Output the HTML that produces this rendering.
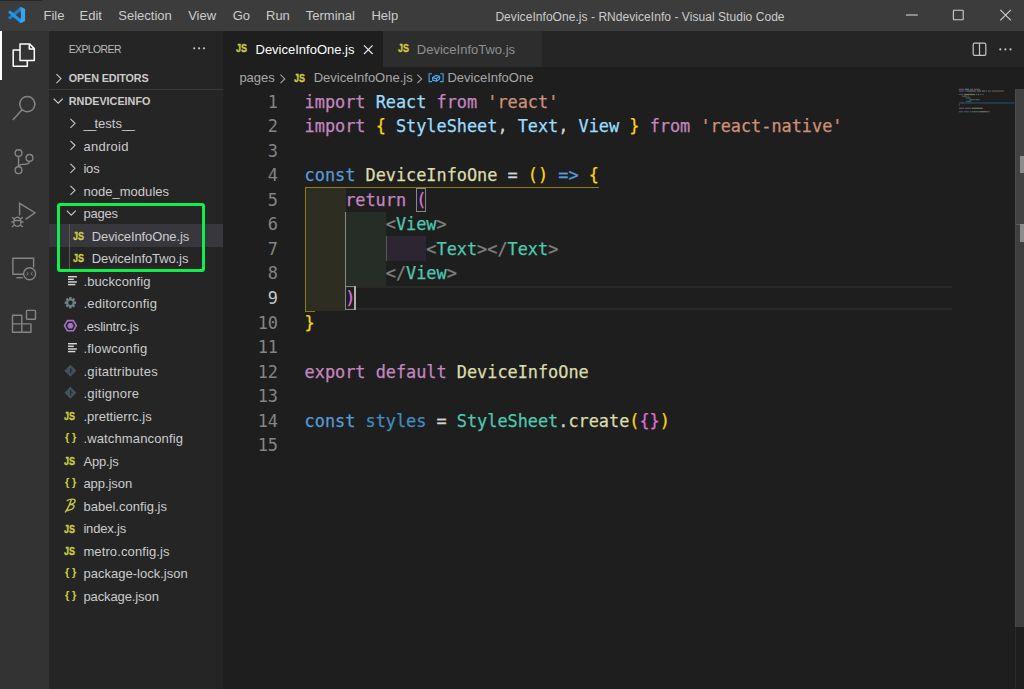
<!DOCTYPE html>
<html><head><meta charset="utf-8"><title>DeviceInfoOne.js - RNdeviceInfo - Visual Studio Code</title>
<style>
*{box-sizing:border-box;margin:0;padding:0}
html,body{width:1024px;height:689px;overflow:hidden;background:#1e1e1e;font-family:"Liberation Sans",sans-serif;color:#ccc}
.abs{position:absolute}
svg{position:absolute;overflow:visible}
#title{left:0;top:0;width:1024px;height:30.5px;background:#3c3c3c}
#title .m{position:absolute;top:8px;font-size:13px;color:#ccc;white-space:nowrap;line-height:16px}
#wtitle{position:absolute;top:8.5px;left:440px;width:400px;text-align:center;font-size:12px;letter-spacing:0.05px;color:#ccc;line-height:16px;white-space:nowrap}
#act{left:0;top:31px;width:49px;height:658px;background:#333}
#side{left:49px;top:31px;width:174px;height:658px;background:#252526}
#tabs{left:223px;top:30.5px;width:801px;height:36px;background:#252526}
.tab{position:absolute;top:0;height:36px;white-space:nowrap}
.tx{position:absolute;white-space:nowrap;line-height:16px;font-size:13px}
#crumbs{left:223px;top:66.5px;width:801px;height:22.5px;background:#1e1e1e}
#editor{left:223px;top:89px;width:801px;height:600px;background:#1e1e1e}
.row{position:absolute;left:0;width:174px;height:22.52px}
.row .t{position:absolute;top:4.1px;line-height:16px;font-size:13px;color:#ccc;white-space:nowrap}
.ic{position:absolute;font-weight:700;white-space:nowrap;line-height:16px}
.code{position:absolute;left:81.6px;margin-top:0.5px;-webkit-text-stroke:0.25px;font-family:"DejaVu Sans Mono","Liberation Mono",monospace;font-size:16.9px;letter-spacing:-0.024px;white-space:pre;line-height:24.57px;height:24.57px;color:#d4d4d4}
.ln{position:absolute;left:0;width:55px;margin-top:0.5px;text-align:right;font-family:"DejaVu Sans Mono","Liberation Mono",monospace;font-size:16.9px;color:#858585;line-height:24.57px;height:24.57px}
.k{color:#c586c0}.b{color:#569cd6}.v{color:#9cdcfe}.s{color:#ce9178}.y{color:#ffd700}.p{color:#da70d6}.w{color:#d4d4d4}.f{color:#dcdcaa}.g{color:#4ec9b0}.t{color:#808080}
.hd{position:absolute;font-size:10.8px;font-weight:700;color:#ccc;white-space:nowrap;line-height:14px}
</style></head><body>
<div class="abs" style="left:0;top:29px;width:49px;height:3px;background:#333"></div><div class="abs" style="left:49px;top:29px;width:174px;height:3px;background:#252526"></div>
<div id="title" class="abs">
<span class="m" style="left:43.5px">File</span>
<span class="m" style="left:79.5px">Edit</span>
<span class="m" style="left:118.3px">Selection</span>
<span class="m" style="left:188.2px">View</span>
<span class="m" style="left:232.7px">Go</span>
<span class="m" style="left:266.0px">Run</span>
<span class="m" style="left:305.8px">Terminal</span>
<span class="m" style="left:371.4px">Help</span>
<div id="wtitle">DeviceInfoOne.js - RNdeviceInfo - Visual Studio Code</div>
<svg style="left:0;top:0" width="1" height="1" ><polygon points="8.0,17.5 10.0,19.7 22.9,8.9 20.6,6.8" fill="#1b80cc"/><polygon points="8.0,12.5 10.0,10.3 22.9,21.1 20.6,23.2" fill="#2196e8"/><polygon points="20.6,6.8 25.1,9 25.1,21 20.6,23.2" fill="#33a6f3"/><polygon points="20.6,12.2 20.6,17.8 17.2,15" fill="#3c3c3c"/></svg>
<svg style="left:0;top:0" width="1" height="1" ><g fill="none" stroke="#d0d0d0" stroke-width="1.1"><path d="M905.9 15 H917.8"/><rect x="953.4" y="10.2" width="9.8" height="9.6" rx="0.6"/><path d="M1000.3 9.8 L1010.9 20.4 M1010.9 9.8 L1000.3 20.4"/></g></svg>
<div class="abs" style="left:0;top:0;width:42px;height:1px;background:#262626"></div>
</div>
<div id="act" class="abs"><div class="abs" style="left:0;top:0;width:1.7px;height:49.2px;background:#fff"></div>
<svg style="left:0;top:0" width="1" height="1" ><g fill="none" stroke="#fff" stroke-width="1.5" stroke-linejoin="round"><path d="M20 12.9 H29.6 L34.3 17.6 V29.6 H20 Z" /><path d="M29.3 13.2 V18 H34"/><path d="M20 18.9 H13.2 V35.3 H27.3 V30"/></g></svg>
<svg style="left:0;top:0" width="1" height="1" ><g fill="none" stroke="#858585" stroke-width="1.5"><circle cx="27.3" cy="73.1" r="7.6"/><path d="M22.3 78.6 L12.8 89"/></g></svg>
<svg style="left:0;top:0" width="1" height="1" ><g fill="none" stroke="#858585" stroke-width="1.4"><circle cx="18.5" cy="122.1" r="3.4"/><circle cx="18.5" cy="139.2" r="3.4"/><circle cx="29.5" cy="126.9" r="3.4"/><path d="M18.5 125.5 V135.8"/><path d="M29.5 130.3 C29.5 133.6 26 133.2 22.5 133.4 C20 133.6 18.8 134.5 18.6 136"/></g></svg>
<svg style="left:0;top:0" width="1" height="1" ><g fill="none" stroke="#858585" stroke-width="1.4" stroke-linejoin="miter"><path d="M19.6 184.5 V172.3 L35 181.7 L25.6 188.4"/><ellipse cx="17.4" cy="190.8" rx="3.6" ry="4.6"/><path d="M13.8 189.5 H21 M12 186.3 L14.6 188 M22.8 186.3 L20.2 188 M11.3 191 H13.8 M21 191 H23.5 M12 196 L14.6 193.8 M22.8 196 L20.2 193.8"/></g></svg>
<svg style="left:0;top:0" width="1" height="1" ><g fill="none" stroke="#858585" stroke-width="1.4"><path d="M23.5 243.2 H12.9 V227.2 H33.6 V236.5"/><path d="M16.5 246.7 H22.8"/><circle cx="29.6" cy="242.7" r="6.0"/><path d="M26.6 241.2 L28.3 242.7 L26.6 244.2 M32.6 241.2 L30.9 242.7 L32.6 244.2" stroke-width="1"/></g></svg>
<svg style="left:0;top:0" width="1" height="1" ><g fill="none" stroke="#858585" stroke-width="1.4" stroke-linejoin="round"><path d="M12.5 284.3 H21.8 V301.3 H12.5 Z"/><path d="M12.5 292.9 H31 V301.3 H21.8"/><rect x="26.5" y="279.4" width="9" height="8.8" rx="0.8"/></g></svg></div>
<div id="side" class="abs">
<span class="abs" style="left:19.7px;top:11.7px;font-size:10.4px;letter-spacing:-0.55px;color:#bbb;line-height:14px;white-space:nowrap">EXPLORER</span>
<svg style="left:0;top:0" width="1" height="1"><circle cx="145.2" cy="17.3" r="1.1" fill="#c5c5c5"/><circle cx="150.1" cy="17.3" r="1.1" fill="#c5c5c5"/><circle cx="155" cy="17.3" r="1.1" fill="#c5c5c5"/></svg>
<svg style="left:0;top:0" width="1" height="1"><path d="M7.45 43.10 L11.95 47.60 L7.45 52.10" fill="none" stroke="#c5c5c5" stroke-width="1.15"/></svg>
<span class="hd" style="left:19.8px;top:39.6px;letter-spacing:-0.14px">OPEN EDITORS</span>
<div class="abs" style="left:0;top:57.6px;width:174px;height:1px;background:#3a3a3b"></div>
<svg style="left:0;top:0" width="1" height="1"><path d="M4.70 67.75 L9.20 72.25 L13.70 67.75" fill="none" stroke="#c5c5c5" stroke-width="1.15"/></svg>
<span class="hd" style="left:19.8px;top:62.6px">RNDEVICEINFO</span>
<div class="row" style="top:80.90px;">
<svg style="left:0;top:0" width="1" height="1"><path d="M21.45 6.86 L25.95 11.36 L21.45 15.86" fill="none" stroke="#c5c5c5" stroke-width="1.15"/></svg>
<span class="t" style="left:34.4px;letter-spacing:0.000px"><span style="letter-spacing:-1.7px">__</span>tests<span style="letter-spacing:-1.7px">__</span></span></div>
<div class="row" style="top:103.42px;">
<svg style="left:0;top:0" width="1" height="1"><path d="M21.45 6.86 L25.95 11.36 L21.45 15.86" fill="none" stroke="#c5c5c5" stroke-width="1.15"/></svg>
<span class="t" style="left:34.4px;letter-spacing:0.270px">android</span></div>
<div class="row" style="top:125.93px;">
<svg style="left:0;top:0" width="1" height="1"><path d="M21.45 6.86 L25.95 11.36 L21.45 15.86" fill="none" stroke="#c5c5c5" stroke-width="1.15"/></svg>
<span class="t" style="left:34.4px;letter-spacing:-0.160px">ios</span></div>
<div class="row" style="top:148.45px;">
<svg style="left:0;top:0" width="1" height="1"><path d="M21.45 6.86 L25.95 11.36 L21.45 15.86" fill="none" stroke="#c5c5c5" stroke-width="1.15"/></svg>
<span class="t" style="left:34.4px;letter-spacing:0.036px">node_modules</span></div>
<div class="row" style="top:170.97px;">
<svg style="left:0;top:0" width="1" height="1"><path d="M17.80 8.71 L22.30 13.21 L26.80 8.71" fill="none" stroke="#c5c5c5" stroke-width="1.15"/></svg>
<span class="t" style="left:34.4px;letter-spacing:-0.230px">pages</span></div>
<div class="row" style="top:193.49px; background:#37373d;">
<span class="ic" style="left:23.8px;top:3.4px;font-size:11px;-webkit-text-stroke:0.35px #cbcb41;transform:scaleX(0.82);transform-origin:0 0;color:#cbcb41">JS</span>
<span class="t" style="left:42.8px;letter-spacing:-0.107px">DeviceInfoOne.js</span></div>
<div class="row" style="top:216.00px;">
<span class="ic" style="left:23.8px;top:3.4px;font-size:11px;-webkit-text-stroke:0.35px #cbcb41;transform:scaleX(0.82);transform-origin:0 0;color:#cbcb41">JS</span>
<span class="t" style="left:42.8px;letter-spacing:-0.111px">DeviceInfoTwo.js</span></div>
<div class="row" style="top:238.52px;">
<svg style="left:0;top:0" width="1" height="1" ><rect x="19" y="6.00" width="8.9" height="1.45" fill="#d4d7d6"/><rect x="19" y="8.60" width="5.8" height="1.45" fill="#d4d7d6"/><rect x="19" y="11.25" width="8.9" height="1.45" fill="#d4d7d6"/><rect x="19" y="13.85" width="7.4" height="1.45" fill="#d4d7d6"/></svg>
<span class="t" style="left:34.4px;letter-spacing:0.123px">.buckconfig</span></div>
<div class="row" style="top:261.04px;">
<svg style="left:0;top:0" width="1" height="1" ><rect x="20.15" y="4.999999999999999" width="2.5" height="11.4" fill="#6d8086" transform="rotate(0 21.4 10.7)"/><rect x="20.15" y="4.999999999999999" width="2.5" height="11.4" fill="#6d8086" transform="rotate(45 21.4 10.7)"/><rect x="20.15" y="4.999999999999999" width="2.5" height="11.4" fill="#6d8086" transform="rotate(90 21.4 10.7)"/><rect x="20.15" y="4.999999999999999" width="2.5" height="11.4" fill="#6d8086" transform="rotate(135 21.4 10.7)"/><circle cx="21.4" cy="10.7" r="4.3" fill="#6d8086"/><circle cx="21.4" cy="10.7" r="2.2" fill="#252526"/></svg>
<span class="t" style="left:34.4px;letter-spacing:0.223px">.editorconfig</span></div>
<div class="row" style="top:283.55px;">
<svg style="left:0;top:0" width="1" height="1" ><polygon points="27.30,10.70 24.35,15.81 18.45,15.81 15.50,10.70 18.45,5.59 24.35,5.59" fill="none" stroke="#a074c4" stroke-width="1.6" stroke-linejoin="round"/><polygon points="24.60,10.70 23.00,13.47 19.80,13.47 18.20,10.70 19.80,7.93 23.00,7.93" fill="#a074c4"/></svg>
<span class="t" style="left:34.4px;letter-spacing:-0.200px">.eslintrc.js</span></div>
<div class="row" style="top:306.07px;">
<svg style="left:0;top:0" width="1" height="1" ><rect x="19" y="6.00" width="8.9" height="1.45" fill="#d4d7d6"/><rect x="19" y="8.60" width="5.8" height="1.45" fill="#d4d7d6"/><rect x="19" y="11.25" width="8.9" height="1.45" fill="#d4d7d6"/><rect x="19" y="13.85" width="7.4" height="1.45" fill="#d4d7d6"/></svg>
<span class="t" style="left:34.4px;letter-spacing:0.238px">.flowconfig</span></div>
<div class="row" style="top:328.59px;">
<svg style="left:0;top:0" width="1" height="1" ><polygon points="21.4,5.1 27.0,10.7 21.4,16.299999999999997 15.799999999999999,10.7" fill="#41535b" stroke="#41535b" stroke-width="0.8" stroke-linejoin="round"/><path d="M21.7 8.1 V13.5 M21.7 9.5 L23.599999999999998 11.1" stroke="#252526" stroke-width="0.9" fill="none"/></svg>
<span class="t" style="left:34.4px;letter-spacing:0.267px">.gitattributes</span></div>
<div class="row" style="top:351.10px;">
<svg style="left:0;top:0" width="1" height="1" ><polygon points="21.4,5.1 27.0,10.7 21.4,16.299999999999997 15.799999999999999,10.7" fill="#41535b" stroke="#41535b" stroke-width="0.8" stroke-linejoin="round"/><path d="M21.7 8.1 V13.5 M21.7 9.5 L23.599999999999998 11.1" stroke="#252526" stroke-width="0.9" fill="none"/></svg>
<span class="t" style="left:34.4px;letter-spacing:0.236px">.gitignore</span></div>
<div class="row" style="top:373.62px;">
<span class="ic" style="left:15.4px;top:3.4px;font-size:11px;-webkit-text-stroke:0.35px #cbcb41;transform:scaleX(0.82);transform-origin:0 0;color:#cbcb41">JS</span>
<span class="t" style="left:34.4px;letter-spacing:0.030px">.prettierrc.js</span></div>
<div class="row" style="top:396.14px;">
<span class="ic" style="left:16px;top:2.1px;font-size:11px;letter-spacing:2.6px;color:#cbcb41">{}</span>
<span class="t" style="left:34.4px;letter-spacing:0.139px">.watchmanconfig</span></div>
<div class="row" style="top:418.65px;">
<span class="ic" style="left:15.4px;top:3.4px;font-size:11px;-webkit-text-stroke:0.35px #cbcb41;transform:scaleX(0.82);transform-origin:0 0;color:#cbcb41">JS</span>
<span class="t" style="left:34.4px;letter-spacing:-0.168px">App.js</span></div>
<div class="row" style="top:441.17px;">
<span class="ic" style="left:16px;top:2.1px;font-size:11px;letter-spacing:2.6px;color:#cbcb41">{}</span>
<span class="t" style="left:34.4px;letter-spacing:-0.051px">app.json</span></div>
<div class="row" style="top:463.69px;">
<svg style="left:0;top:0" width="1" height="1" ><path transform="translate(-0.9,-1.3)" d="M19.2 6.8 C21.5 5.2 26.8 4.6 27 7 C27.2 9.2 23.5 10.6 21.6 10.9 C24.2 10.6 26.3 11.4 25.9 13 C25.4 15 21 16.6 18.3 17 M23.2 6 C22 10 20.3 14.4 17.4 18.2" fill="none" stroke="#cbcb41" stroke-width="1.4" stroke-linecap="round"/></svg>
<span class="t" style="left:34.4px;letter-spacing:0.034px">babel.config.js</span></div>
<div class="row" style="top:486.21px;">
<span class="ic" style="left:15.4px;top:3.4px;font-size:11px;-webkit-text-stroke:0.35px #cbcb41;transform:scaleX(0.82);transform-origin:0 0;color:#cbcb41">JS</span>
<span class="t" style="left:34.4px;letter-spacing:-0.169px">index.js</span></div>
<div class="row" style="top:508.72px;">
<span class="ic" style="left:15.4px;top:3.4px;font-size:11px;-webkit-text-stroke:0.35px #cbcb41;transform:scaleX(0.82);transform-origin:0 0;color:#cbcb41">JS</span>
<span class="t" style="left:34.4px;letter-spacing:0.118px">metro.config.js</span></div>
<div class="row" style="top:531.24px;">
<span class="ic" style="left:16px;top:2.1px;font-size:11px;letter-spacing:2.6px;color:#cbcb41">{}</span>
<span class="t" style="left:34.4px;letter-spacing:0.021px">package-lock.json</span></div>
<div class="row" style="top:553.76px;">
<span class="ic" style="left:16px;top:2.1px;font-size:11px;letter-spacing:2.6px;color:#cbcb41">{}</span>
<span class="t" style="left:34.4px;letter-spacing:-0.102px">package.json</span></div>
<div class="abs" style="left:20px;top:193.49px;width:1px;height:45.03px;background:#585858"></div>
<div class="abs" style="left:8.2px;top:172px;width:148.1px;height:68.5px;border:3px solid #0df04b;border-radius:3px"></div>
</div>
<div id="tabs" class="abs">
<div class="tab" style="left:0;width:160px;background:#1e1e1e">
<span class="ic" style="left:13.4px;top:9.9px;font-size:11px;-webkit-text-stroke:0.35px #cbcb41;transform:scaleX(0.82);transform-origin:0 0;color:#cbcb41">JS</span>
<span class="tx" style="left:32.5px;top:11px;color:#fff">DeviceInfoOne.js</span>
<svg style="left:0;top:0" width="1" height="1"><path d="M141 14.4 L149.6 23 M149.6 14.4 L141 23" stroke="#e8e8e8" stroke-width="1.2" fill="none"/></svg>
</div>
<div class="tab" style="left:160.3px;width:159px;background:#2d2d2d">
<span class="ic" style="left:14.4px;top:9.9px;font-size:11px;-webkit-text-stroke:0.35px #cbcb41;transform:scaleX(0.82);transform-origin:0 0;color:#cbcb41">JS</span>
<span class="tx" style="left:33.5px;top:11px;color:#909090">DeviceInfoTwo.js</span>
</div>
<svg style="left:0;top:0" width="1" height="1" ><g fill="none" stroke="#c5c5c5" stroke-width="1.2"><rect x="750.2" y="12.2" width="12.6" height="12.2" rx="1.4"/><path d="M756.5 12.2 V24.4"/></g><circle cx="777.3" cy="18.4" r="1.05" fill="#c5c5c5"/><circle cx="782.4" cy="18.4" r="1.05" fill="#c5c5c5"/><circle cx="787.5" cy="18.4" r="1.05" fill="#c5c5c5"/></svg>
</div>
<div id="crumbs" class="abs">
<span class="tx" style="left:16.4px;top:3.4px;color:#a9a9a9">pages</span>
<svg style="left:0;top:0" width="1" height="1"><path d="M57.46 7.63 L61.74 11.90 L57.46 16.18" fill="none" stroke="#a0a0a0" stroke-width="1.15"/></svg>
<span class="ic" style="left:71px;top:3.4px;font-size:11px;-webkit-text-stroke:0.35px #cbcb41;transform:scaleX(0.82);transform-origin:0 0;color:#cbcb41">JS</span>
<span class="tx" style="left:90.7px;top:3.4px;color:#a9a9a9">DeviceInfoOne.js</span>
<svg style="left:0;top:0" width="1" height="1"><path d="M194.36 7.63 L198.64 11.90 L194.36 16.18" fill="none" stroke="#a0a0a0" stroke-width="1.15"/></svg>
<svg style="left:0;top:0" width="1" height="1" ><g fill="none" stroke="#4ba6ea" stroke-width="1.1"><path d="M209 6.8 H206.1 V14.6 H209"/><path d="M217.2 6.8 H220.1 V14.6 H217.2"/></g><g fill="none" stroke="#4ba6ea" stroke-width="1.2" stroke-linejoin="round"><path d="M209.6 10.6 L212.8 8.4 L216.6 9.4 L216.6 12 L213.4 14.2 L209.6 13.2 Z"/><path d="M209.6 10.6 L213.4 11.6 L216.6 9.4 M213.4 11.6 V14.2"/></g></svg>
<span class="tx" style="left:224.4px;top:3.4px;color:#a9a9a9">DeviceInfoOne</span>
</div>
<div id="editor" class="abs">
<div class="abs" style="left:81.6px;top:196.56px;width:647px;height:24.57px;border-top:2px solid #282828;border-bottom:2px solid #282828"></div>
<div class="abs" style="left:82.1px;top:98.88px;width:40.60px;height:122.65px;background:#2d2d22"></div>
<div class="abs" style="left:122.20px;top:122.85px;width:40.60px;height:73.71px;background:#252d26"></div>
<div class="abs" style="left:162.80px;top:147.42px;width:40.60px;height:24.57px;background:#2d2530"></div>
<div class="abs" style="left:122.20px;top:122.85px;width:1px;height:73.71px;background:#8a8a8a"></div>
<div class="abs" style="left:162.80px;top:147.42px;width:1px;height:24.57px;background:#5a5a5a"></div>
<div class="abs" style="left:81.6px;top:97.68px;width:294.35px;height:1px;background:#8f7d12"></div>
<div class="abs" style="left:81.6px;top:97.68px;width:1px;height:124.35px;background:#8f7d12"></div>
<div class="abs" style="left:81.6px;top:222.03px;width:10px;height:1px;background:#8f7d12"></div>
<div class="abs" style="left:193.05px;top:98.88px;width:10.15px;height:23.97px;border:1px solid #888"></div>
<div class="abs" style="left:122.00px;top:197.16px;width:10.15px;height:23.97px;border:1px solid #888"></div>
<div class="abs" style="left:130.95px;top:197.16px;width:2px;height:23.97px;background:#aeafad"></div>
<div class="ln" style="top:0.00px;color:#858585">1</div>
<div class="code" style="top:0.00px"><span class="k">import</span> <span class="v">React</span> <span class="k">from</span> <span class="s">'react'</span></div>
<div class="ln" style="top:24.57px;color:#858585">2</div>
<div class="code" style="top:24.57px"><span class="k">import</span> <span class="y">{</span> <span class="v">StyleSheet</span>, <span class="v">Text</span>, <span class="v">View</span> <span class="y">}</span> <span class="k">from</span> <span class="s">'react-native'</span></div>
<div class="ln" style="top:49.14px;color:#858585">3</div>
<div class="ln" style="top:73.71px;color:#858585">4</div>
<div class="code" style="top:73.71px"><span class="b">const</span> <span class="f">DeviceInfoOne</span> = <span class="y">()</span> <span class="b">=&gt;</span> <span class="y">{</span></div>
<div class="ln" style="top:98.28px;color:#858585">5</div>
<div class="code" style="top:98.28px">    <span class="k">return</span> <span class="p">(</span></div>
<div class="ln" style="top:122.85px;color:#858585">6</div>
<div class="code" style="top:122.85px">        <span class="t">&lt;</span><span class="g">View</span><span class="t">&gt;</span></div>
<div class="ln" style="top:147.42px;color:#858585">7</div>
<div class="code" style="top:147.42px">            <span class="t">&lt;</span><span class="g">Text</span><span class="t">&gt;&lt;/</span><span class="g">Text</span><span class="t">&gt;</span></div>
<div class="ln" style="top:171.99px;color:#858585">8</div>
<div class="code" style="top:171.99px">        <span class="t">&lt;/</span><span class="g">View</span><span class="t">&gt;</span></div>
<div class="ln" style="top:196.56px;color:#c6c6c6">9</div>
<div class="code" style="top:196.56px">    <span class="p">)</span></div>
<div class="ln" style="top:221.13px;color:#858585">10</div>
<div class="code" style="top:221.13px"><span class="y">}</span></div>
<div class="ln" style="top:245.70px;color:#858585">11</div>
<div class="ln" style="top:270.27px;color:#858585">12</div>
<div class="code" style="top:270.27px"><span class="k">export</span> <span class="k">default</span> <span class="f">DeviceInfoOne</span></div>
<div class="ln" style="top:294.84px;color:#858585">13</div>
<div class="ln" style="top:319.41px;color:#858585">14</div>
<div class="code" style="top:319.41px"><span class="b">const</span> <span class="b" style="color:#3f8ec0">styles</span> = <span class="g">StyleSheet</span>.<span class="f">create</span><span class="y">(</span><span class="p">{}</span><span class="y">)</span></div>
<div class="ln" style="top:343.98px;color:#858585">15</div>
<svg style="left:0;top:0" width="1" height="1"><rect x="735.80" y="13.38" width="55.70" height="1.2" fill="#264f78" opacity="0.9"/><rect x="735.80" y="-0.30" width="5.12" height="1.25" fill="#c586c0" opacity="0.42"/><rect x="741.77" y="-0.30" width="4.26" height="1.25" fill="#9cdcfe" opacity="0.42"/><rect x="746.89" y="-0.30" width="3.41" height="1.25" fill="#c586c0" opacity="0.42"/><rect x="751.15" y="-0.30" width="5.97" height="1.25" fill="#ce9178" opacity="0.42"/><rect x="735.80" y="1.42" width="5.12" height="1.25" fill="#c586c0" opacity="0.42"/><rect x="741.77" y="1.42" width="0.85" height="1.25" fill="#ffd700" opacity="0.42"/><rect x="743.48" y="1.42" width="8.53" height="1.25" fill="#9cdcfe" opacity="0.42"/><rect x="752.01" y="1.42" width="0.85" height="1.25" fill="#d4d4d4" opacity="0.42"/><rect x="753.71" y="1.42" width="3.41" height="1.25" fill="#9cdcfe" opacity="0.42"/><rect x="757.12" y="1.42" width="0.85" height="1.25" fill="#d4d4d4" opacity="0.42"/><rect x="758.83" y="1.42" width="3.41" height="1.25" fill="#9cdcfe" opacity="0.42"/><rect x="763.10" y="1.42" width="0.85" height="1.25" fill="#ffd700" opacity="0.42"/><rect x="764.80" y="1.42" width="3.41" height="1.25" fill="#c586c0" opacity="0.42"/><rect x="769.07" y="1.42" width="11.94" height="1.25" fill="#ce9178" opacity="0.42"/><rect x="735.80" y="4.87" width="4.26" height="1.25" fill="#569cd6" opacity="0.42"/><rect x="740.92" y="4.87" width="11.09" height="1.25" fill="#dcdcaa" opacity="0.42"/><rect x="752.86" y="4.87" width="0.85" height="1.25" fill="#d4d4d4" opacity="0.42"/><rect x="754.57" y="4.87" width="1.71" height="1.25" fill="#ffd700" opacity="0.42"/><rect x="757.12" y="4.87" width="1.71" height="1.25" fill="#569cd6" opacity="0.42"/><rect x="759.68" y="4.87" width="0.85" height="1.25" fill="#ffd700" opacity="0.42"/><rect x="739.21" y="6.59" width="5.12" height="1.25" fill="#c586c0" opacity="0.42"/><rect x="745.18" y="6.59" width="0.85" height="1.25" fill="#da70d6" opacity="0.42"/><rect x="742.62" y="8.31" width="0.85" height="1.25" fill="#808080" opacity="0.42"/><rect x="743.48" y="8.31" width="3.41" height="1.25" fill="#4ec9b0" opacity="0.42"/><rect x="746.89" y="8.31" width="0.85" height="1.25" fill="#808080" opacity="0.42"/><rect x="746.04" y="10.03" width="0.85" height="1.25" fill="#808080" opacity="0.42"/><rect x="746.89" y="10.03" width="3.41" height="1.25" fill="#4ec9b0" opacity="0.42"/><rect x="750.30" y="10.03" width="2.56" height="1.25" fill="#808080" opacity="0.42"/><rect x="752.86" y="10.03" width="3.41" height="1.25" fill="#4ec9b0" opacity="0.42"/><rect x="756.27" y="10.03" width="0.85" height="1.25" fill="#808080" opacity="0.42"/><rect x="742.62" y="11.75" width="1.71" height="1.25" fill="#808080" opacity="0.42"/><rect x="744.33" y="11.75" width="3.41" height="1.25" fill="#4ec9b0" opacity="0.42"/><rect x="747.74" y="11.75" width="0.85" height="1.25" fill="#808080" opacity="0.42"/><rect x="739.21" y="13.48" width="0.85" height="1.25" fill="#da70d6" opacity="0.42"/><rect x="735.80" y="15.20" width="0.85" height="1.25" fill="#ffd700" opacity="0.42"/><rect x="735.80" y="18.64" width="5.12" height="1.25" fill="#c586c0" opacity="0.42"/><rect x="741.77" y="18.64" width="5.97" height="1.25" fill="#c586c0" opacity="0.42"/><rect x="748.59" y="18.64" width="11.09" height="1.25" fill="#dcdcaa" opacity="0.42"/><rect x="735.80" y="22.09" width="4.26" height="1.25" fill="#569cd6" opacity="0.42"/><rect x="740.92" y="22.09" width="5.12" height="1.25" fill="#569cd6" opacity="0.42"/><rect x="746.89" y="22.09" width="0.85" height="1.25" fill="#d4d4d4" opacity="0.42"/><rect x="748.59" y="22.09" width="8.53" height="1.25" fill="#4ec9b0" opacity="0.42"/><rect x="757.12" y="22.09" width="0.85" height="1.25" fill="#d4d4d4" opacity="0.42"/><rect x="757.98" y="22.09" width="5.12" height="1.25" fill="#dcdcaa" opacity="0.42"/><rect x="763.10" y="22.09" width="0.85" height="1.25" fill="#ffd700" opacity="0.42"/><rect x="763.95" y="22.09" width="1.71" height="1.25" fill="#da70d6" opacity="0.42"/><rect x="765.65" y="22.09" width="0.85" height="1.25" fill="#ffd700" opacity="0.42"/></svg>
<div class="abs" style="left:791.5px;top:0;width:9.5px;height:537.7px;background:#424242;border-left:1px solid #4b4b4b"></div>
<div class="abs" style="left:791.5px;top:537.7px;width:1.2px;height:70px;background:#2b2b2b"></div>
<div class="abs" style="left:791.5px;top:135.1px;width:9.5px;height:402.6px;background:#3f3f3f;border-left:1px solid #484848;border-top:1px solid #5a5a5a"></div>
<div class="abs" style="left:797px;top:67.2px;width:4px;height:17px;background:#8c8c8c"></div>
<div class="abs" style="left:797px;top:135.1px;width:4px;height:17.5px;background:#8c8c8c"></div>
</div>
</body></html>
